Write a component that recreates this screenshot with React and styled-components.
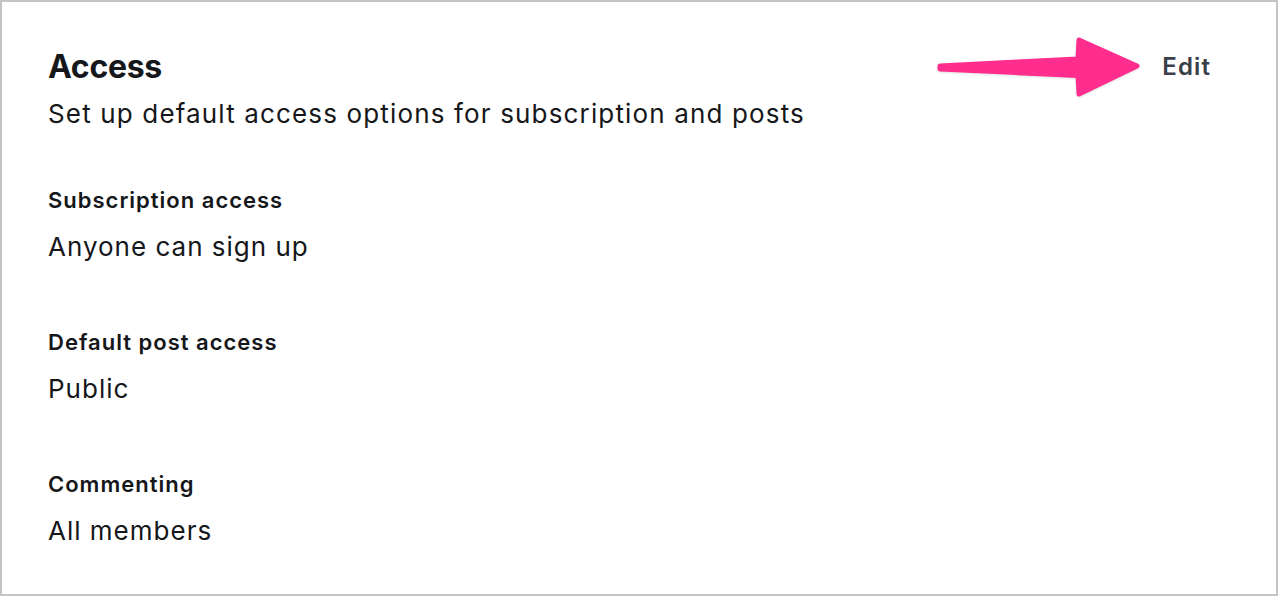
import styled, { createGlobalStyle } from "styled-components";

const GlobalStyle = createGlobalStyle`
  html, body {
    margin: 0;
    padding: 0;
    background: #ffffff;
  }
  body {
    font-family: Inter, "Noto Sans", sans-serif;
    color: #15171a;
    -webkit-font-smoothing: antialiased;
  }
`;

const Frame = styled.div`
  box-sizing: border-box;
  width: 1278px;
  height: 596px;
  border: 2px solid #c4c4c4;
  position: relative;
  background: #fff;
  padding: 45px 65px 0 46px;
`;

const Header = styled.div`
  display: flex;
  justify-content: space-between;
  align-items: flex-start;
`;

const Title = styled.h2`
  margin: 0;
  font-size: 32px;
  font-weight: 700;
  line-height: 40px;
  letter-spacing: -0.3px;
`;

const Subtitle = styled.p`
  margin: 10px 0 0;
  font-size: 26px;
  line-height: 34px;
  font-weight: 400;
  letter-spacing: 1.15px;
`;

const EditButton = styled.button`
  border: 0;
  background: none;
  padding: 0;
  margin-top: 4px;
  font-family: inherit;
  font-size: 24px;
  line-height: 32px;
  font-weight: 600;
  letter-spacing: 1.1px;
  color: #394047;
  cursor: pointer;
`;

const Sections = styled.div`
  display: flex;
  flex-direction: column;
  gap: 64px;
  margin-top: 55px;
`;

const Field = styled.div`
  display: flex;
  flex-direction: column;
  gap: 16px;
`;

const Label = styled.div`
  font-size: 22px;
  font-weight: 600;
  line-height: 28px;
  letter-spacing: 1px;
`;

const Value = styled.div`
  font-size: 26px;
  line-height: 34px;
  letter-spacing: 1px;
`;

const Arrow = styled.svg`
  position: absolute;
  left: 928px;
  top: 28px;
  filter: drop-shadow(0 1px 1px rgba(0, 0, 0, 0.12));
`;

const fields = [
  { label: "Subscription access", value: "Anyone can sign up" },
  { label: "Default post access", value: "Public" },
  { label: "Commenting", value: "All members" },
];

export default function App() {
  return (
    <>
      <GlobalStyle />
      <Frame>
        <Header>
          <div>
            <Title>Access</Title>
            <Subtitle>Set up default access options for subscription and posts</Subtitle>
          </div>
          <EditButton>Edit</EditButton>
        </Header>
        <Sections>
          {fields.map((f) => (
            <Field key={f.label}>
              <Label>{f.label}</Label>
              <Value>{f.value}</Value>
            </Field>
          ))}
        </Sections>
        <Arrow width="220" height="74" viewBox="0 0 220 74">
          <path
            d="M10 36 L148 29 L149 10 L207 36 L149 64 L148 45.5 L10 39 Z"
            fill="#ff2d8d"
            stroke="#ff2d8d"
            strokeWidth="5"
            strokeLinejoin="round"
          />
        </Arrow>
      </Frame>
    </>
  );
}
